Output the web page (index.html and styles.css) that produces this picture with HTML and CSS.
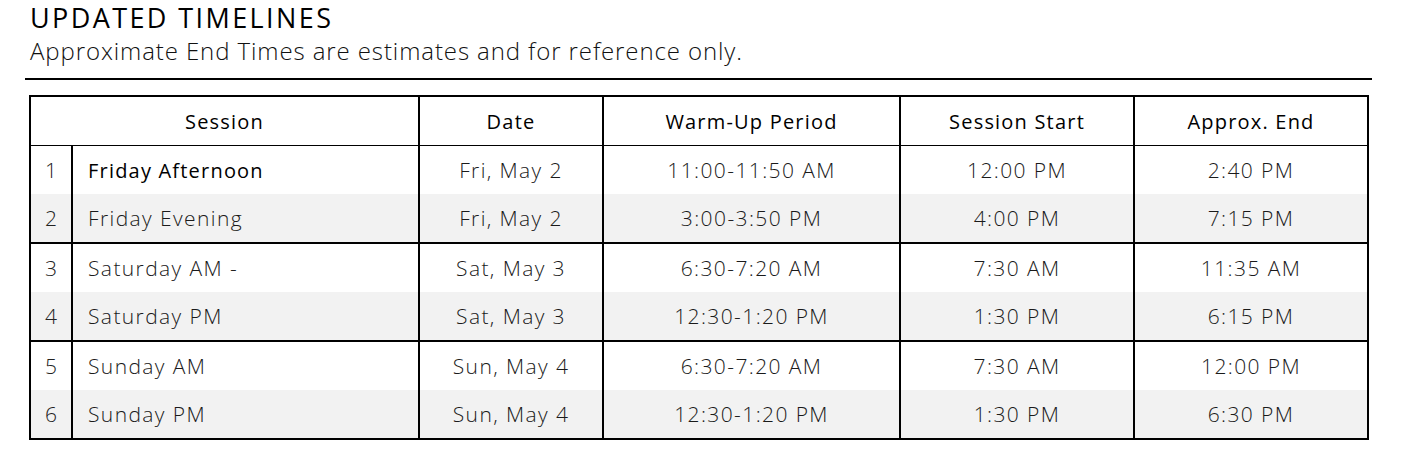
FILE: index.html
```html
<!DOCTYPE html>
<html>
<head>
<meta charset="utf-8">
<link rel="stylesheet" href="styles.css">
</head>
<body>
<div class="intro">
  <h1 class="title">UPDATED TIMELINES</h1>
  <p class="subtitle">Approximate End Times are estimates and for reference only.</p>
</div>
<table class="schedule">
  <colgroup>
    <col class="c-num"><col class="c-name"><col class="c-date"><col class="c-warm"><col class="c-start"><col class="c-end">
  </colgroup>
  <thead>
    <tr>
      <th colspan="2">Session</th>
      <th>Date</th>
      <th>Warm-Up Period</th>
      <th>Session Start</th>
      <th>Approx. End</th>
    </tr>
  </thead>
  <tbody>
    <tr class="odd">
      <td class="num">1</td><td class="name strong">Friday Afternoon</td><td>Fri, May 2</td><td>11:00-11:50 AM</td><td>12:00 PM</td><td>2:40 PM</td>
    </tr>
    <tr class="even">
      <td class="num">2</td><td class="name">Friday Evening</td><td>Fri, May 2</td><td>3:00-3:50 PM</td><td>4:00 PM</td><td>7:15 PM</td>
    </tr>
    <tr class="odd group">
      <td class="num">3</td><td class="name">Saturday AM -</td><td>Sat, May 3</td><td>6:30-7:20 AM</td><td>7:30 AM</td><td>11:35 AM</td>
    </tr>
    <tr class="even">
      <td class="num">4</td><td class="name">Saturday PM</td><td>Sat, May 3</td><td>12:30-1:20 PM</td><td>1:30 PM</td><td>6:15 PM</td>
    </tr>
    <tr class="odd group">
      <td class="num">5</td><td class="name">Sunday AM</td><td>Sun, May 4</td><td>6:30-7:20 AM</td><td>7:30 AM</td><td>12:00 PM</td>
    </tr>
    <tr class="even">
      <td class="num">6</td><td class="name">Sunday PM</td><td>Sun, May 4</td><td>12:30-1:20 PM</td><td>1:30 PM</td><td>6:30 PM</td>
    </tr>
  </tbody>
</table>
</body>
</html>
```
FILE: styles.css
```css
html, body {
  margin: 0;
  padding: 0;
  background: #ffffff;
}
body {
  font-family: "Open Sans", "Noto Sans", "Liberation Sans", sans-serif;
  color: #111;
}
.intro {
  margin: 0 32px 0 25px;
  padding: 1px 0 12px 5px;
  border-bottom: 2px solid #000;
}
.title {
  margin: 0;
  font-size: 27px;
  font-weight: 400;
  line-height: 34px;
  letter-spacing: 2.4px;
  color: #000;
}
.subtitle {
  margin: 1px 0 0;
  font-size: 24px;
  font-weight: 300;
  line-height: 30px;
  letter-spacing: 0.9px;
  color: #111;
}
.schedule {
  margin: 15px 0 0 29px;
  width: 1340px;
  border-collapse: collapse;
  table-layout: fixed;
  border: 2px solid #000;
}
.c-num { width: 42px; }
.c-name { width: 347px; }
.c-date { width: 184px; }
.c-warm { width: 297px; }
.c-start { width: 234px; }
.c-end { width: 234px; }
.schedule th {
  height: 48px;
  padding: 0;
  font-size: 20px;
  font-weight: 400;
  letter-spacing: 1.2px;
  color: #000;
  border: 2px solid #000;
  border-bottom: 1px solid #000;
  text-align: center;
}
.schedule td {
  height: 48px;
  padding: 0;
  text-align: center;
  font-size: 21px;
  font-weight: 300;
  letter-spacing: 1.4px;
  color: #1a1a1a;
  border-left: 2px solid #000;
  border-right: 2px solid #000;
}
.schedule td.num {
  color: #222;
  letter-spacing: 0;
}
.schedule td.name {
  text-align: left;
  padding-left: 15px;
}
.schedule td.strong {
  font-size: 20px;
  font-weight: 400;
  letter-spacing: 1.2px;
  color: #000;
}
.schedule tr.even td {
  background: #f2f2f2;
}
.schedule tr.group td {
  border-top: 2px solid #000;
}
```
